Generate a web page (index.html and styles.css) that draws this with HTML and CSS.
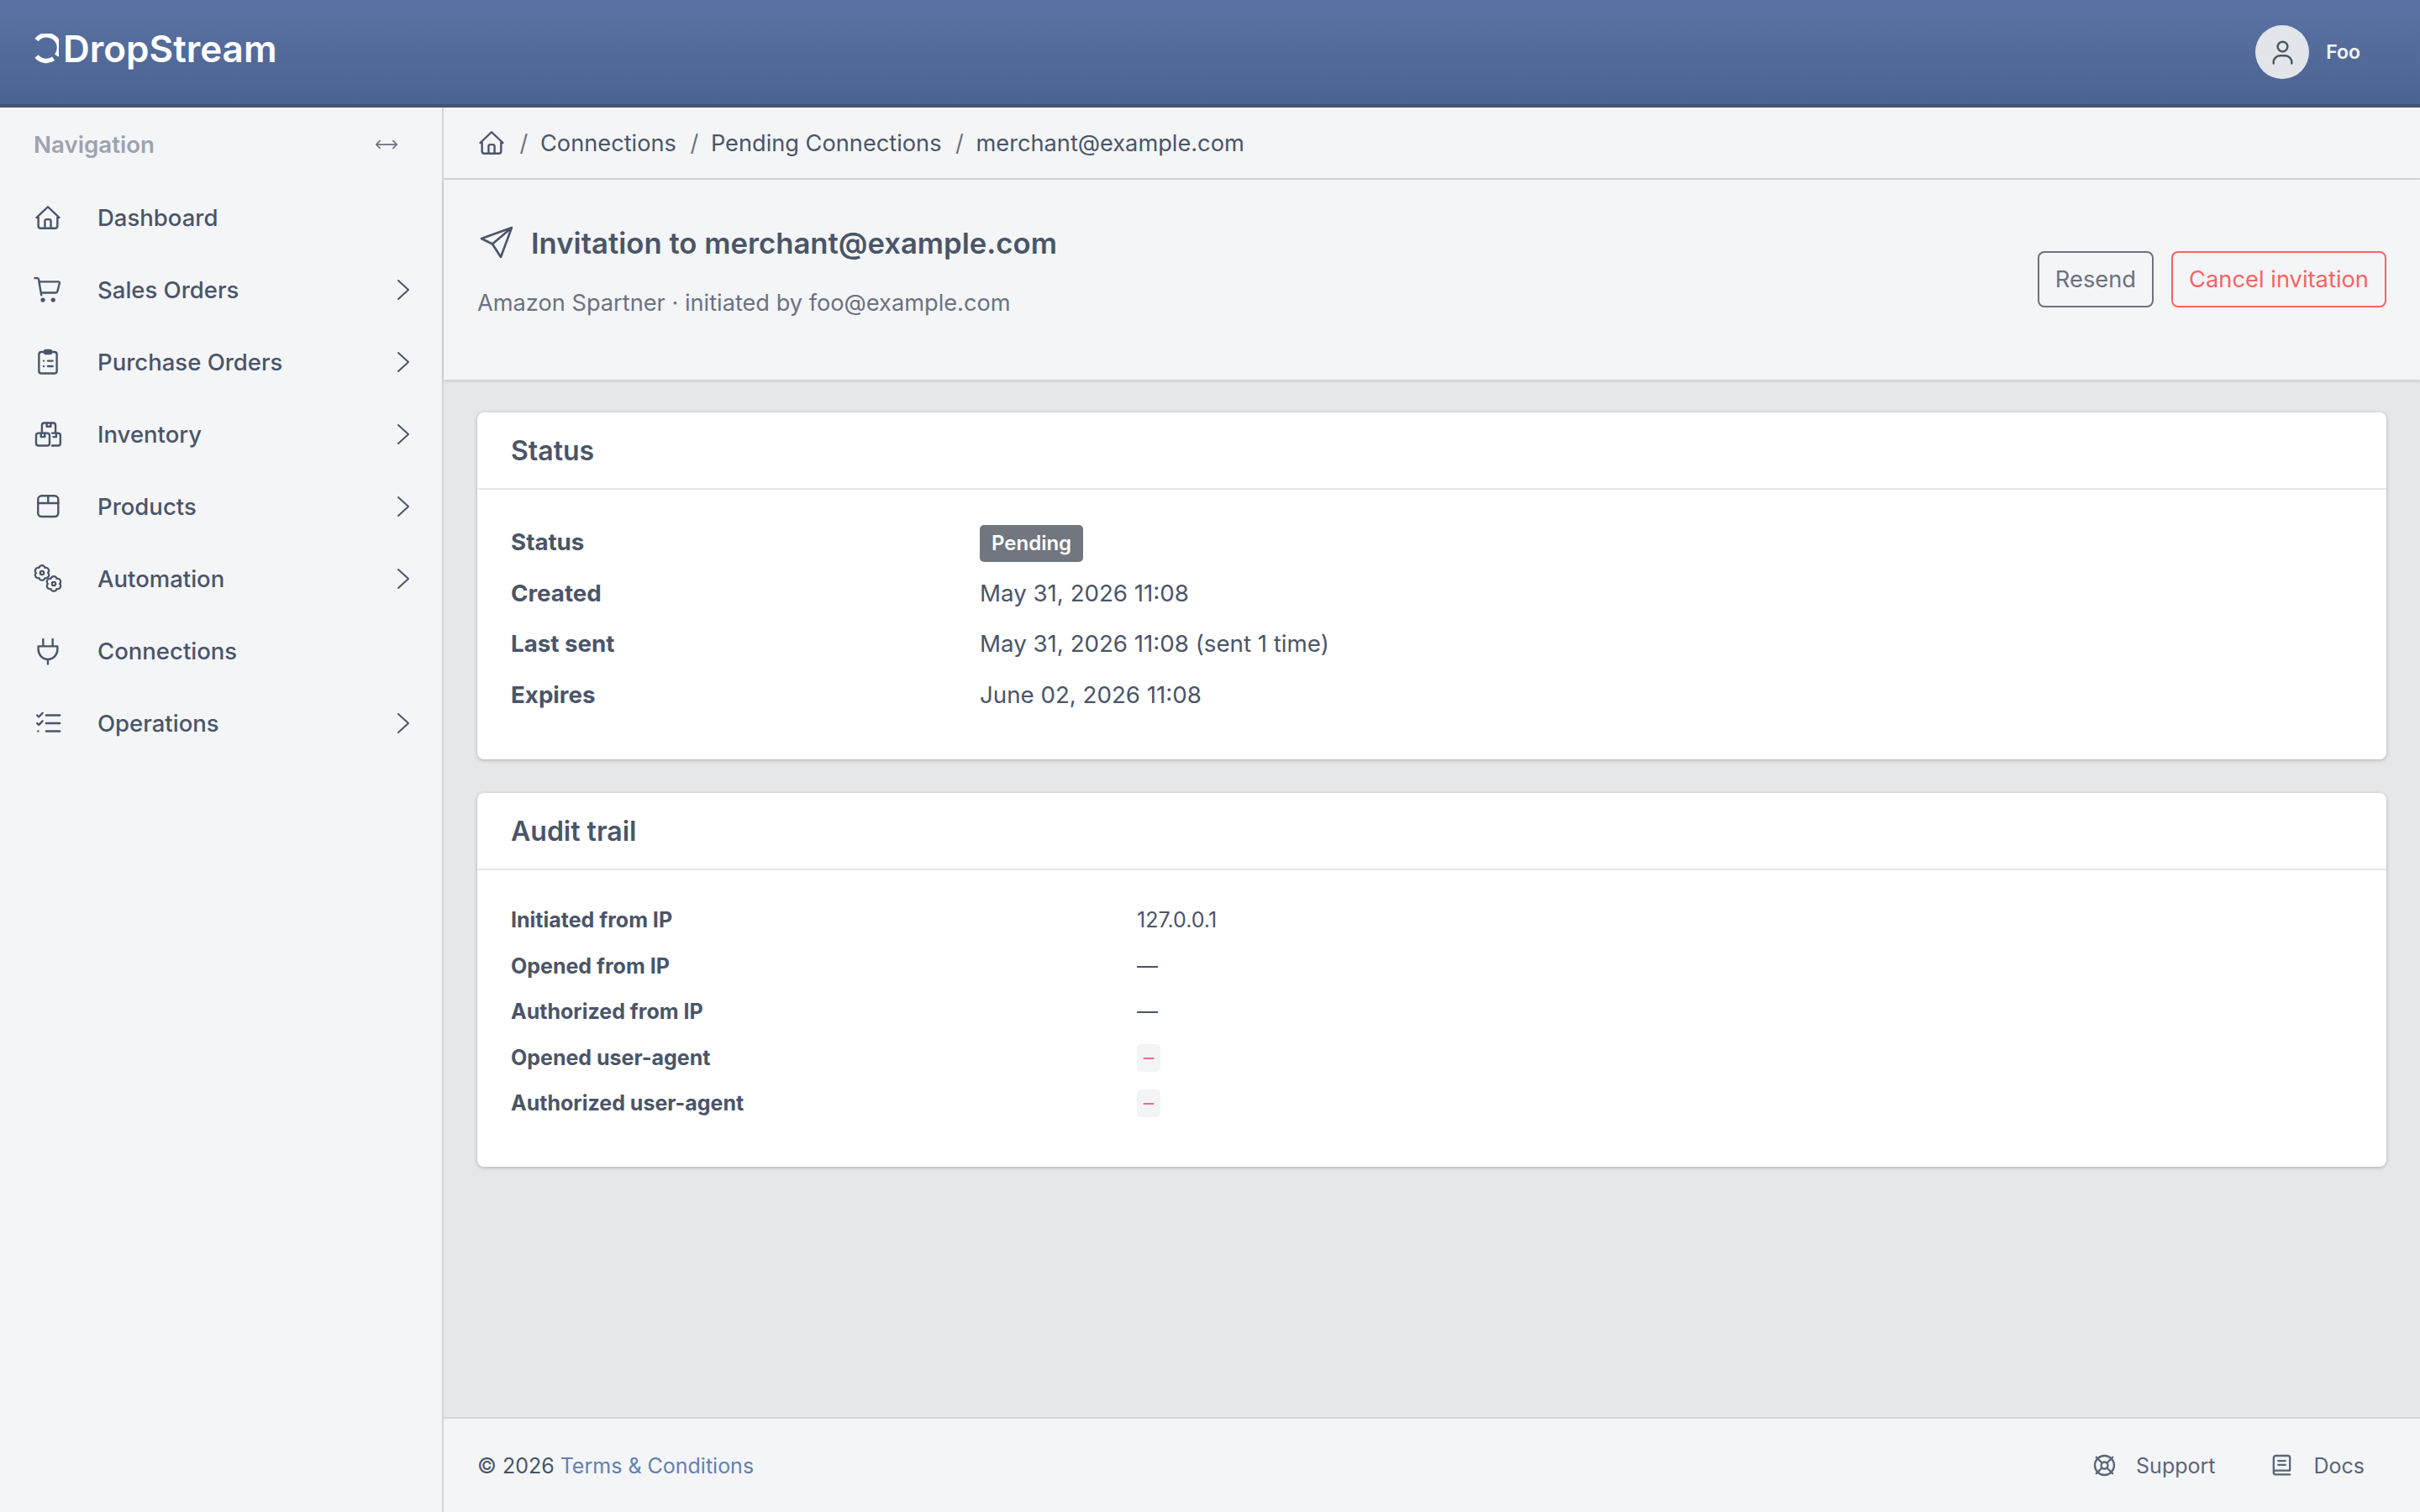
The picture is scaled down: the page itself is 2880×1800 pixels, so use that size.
FILE: index.html
```html
<!DOCTYPE html>
<html lang="en">
<head>
  <meta charset="UTF-8">
  <title>Invitation to merchant@example.com</title>
  <link rel="stylesheet" href="styles.css">
</head>
<body>
  <header class="topbar">
    <div class="brand">
      <svg class="brand-mark" viewBox="0 0 30 36" fill="none" stroke="#fff" stroke-width="5.500">
        <path d="M3.500 7.500A15 15 0 0 1 27.300 26.100"/>
        <path d="M23.600 29.800A15 15 0 0 1 3.500 27.100"/>
      </svg>
      <span class="brand-name">DropStream</span>
    </div>
    <div class="user">
      <span class="avatar">
        <svg viewBox="0 0 24 24" fill="none" stroke="#4b5563" stroke-width="1.600" stroke-linecap="round"><circle cx="12" cy="7.500" r="3.800"/><path d="M5 20.500v-1a5 5 0 0 1 5-5h4a5 5 0 0 1 5 5v1"/></svg>
      </span>
      <span class="user-name">Foo</span>
    </div>
  </header>

  <div class="shell">
    <aside class="sidebar">
      <div class="side-head">
        <span>Navigation</span>
        <svg class="side-toggle" viewBox="0 0 32 14" fill="none" stroke="#6b7280" stroke-width="2" stroke-linecap="round" stroke-linejoin="round"><path d="M2 7h28M7 2 2 7l5 5M25 2l5 5-5 5"/></svg>
      </div>
      <nav class="nav">
        <a class="nav-item">
          <svg class="nav-icon" viewBox="0 0 24 24"><path d="M4 12H2.500L12 3l9.500 9H20v7a2 2 0 0 1-2 2H6a2 2 0 0 1-2-2z"/><path d="M9.500 21v-6a1.500 1.500 0 0 1 1.500-1.500h2a1.500 1.500 0 0 1 1.500 1.500v6"/></svg>
          <span>Dashboard</span>
        </a>
        <a class="nav-item">
          <svg class="nav-icon" viewBox="0 0 24 24"><path d="M1 2.200h2.200a1 1 0 0 1 1 .8L6.500 16.500M4.600 5.200h16.200a1 1 0 0 1 1 1.200l-1.800 7a1.500 1.500 0 0 1-1.400 1.100H6.200"/><circle class="dot" cx="7.800" cy="20.500" r="1"/><circle class="dot" cx="16.400" cy="20.500" r="1"/></svg>
          <span>Sales Orders</span>
          <svg class="chev" viewBox="0 0 16 26"><path d="M2 2l12 11L2 24"/></svg>
        </a>
        <a class="nav-item">
          <svg class="nav-icon" viewBox="0 0 24 24"><rect x="4.500" y="3.500" width="15" height="18" rx="2"/><path d="M9 3.500a1.500 1.500 0 0 1 1.500-1.500h3a1.500 1.500 0 0 1 1.500 1.500 1.500 1.500 0 0 1-1.500 1.500h-3A1.500 1.500 0 0 1 9 3.500z"/><path d="M8.500 11h.01M8.500 15.500h.01M12 11h4M12 15.500h4"/></svg>
          <span>Purchase Orders</span>
          <svg class="chev" viewBox="0 0 16 26"><path d="M2 2l12 11L2 24"/></svg>
        </a>
        <a class="nav-item">
          <svg class="nav-icon" viewBox="0 0 24 24"><path d="M7 11V4.500a2 2 0 0 1 2-2h7.400a2 2 0 0 1 2 2V11"/><path d="M11 2.500v3h3.400v-3"/><rect x="2.100" y="11" width="11.300" height="10.500" rx="2"/><path d="M6.200 11v3.200h3.200V11"/><path d="M15.500 11h5a2 2 0 0 1 2 2v6.500a2 2 0 0 1-2 2h-5"/><path d="M16.500 14.200H19V11"/></svg>
          <span>Inventory</span>
          <svg class="chev" viewBox="0 0 16 26"><path d="M2 2l12 11L2 24"/></svg>
        </a>
        <a class="nav-item">
          <svg class="nav-icon" viewBox="0 0 24 24"><rect x="3.700" y="3" width="17" height="17.500" rx="3"/><path d="M3.700 9.200h17M12.200 3v6.200"/></svg>
          <span>Products</span>
          <svg class="chev" viewBox="0 0 16 26"><path d="M2 2l12 11L2 24"/></svg>
        </a>
        <a class="nav-item">
          <svg class="nav-icon nav-icon-gears" viewBox="0 0 34 34">
            <path d="M17 10a3.600 3.600 0 0 1-3.500 6.060a3.600 3.600 0 0 1-7 0a3.600 3.600 0 0 1-3.500-6.060a3.600 3.600 0 0 1 3.500-6.060a3.600 3.600 0 0 1 7 0a3.600 3.600 0 0 1 3.500 6.060z"/><circle cx="10" cy="10" r="2.200"/>
            <path d="M31 23a3.600 3.600 0 0 1-3.500 6.060a3.600 3.600 0 0 1-7 0a3.600 3.600 0 0 1-3.500-6.060a3.600 3.600 0 0 1 3.500-6.060a3.600 3.600 0 0 1 7 0a3.600 3.600 0 0 1 3.500 6.060z"/><circle cx="24" cy="23" r="2.200"/>
          </svg>
          <span>Automation</span>
          <svg class="chev" viewBox="0 0 16 26"><path d="M2 2l12 11L2 24"/></svg>
        </a>
        <a class="nav-item">
          <svg class="nav-icon" viewBox="0 0 24 24"><path d="M8 2v6M16 2v6M4 8h16v3a8 8 0 0 1-16 0zM12 19v4"/></svg>
          <span>Connections</span>
        </a>
        <a class="nav-item">
          <svg class="nav-icon" viewBox="0 0 24 24"><path d="M10.500 5.300H22M10.500 12H22M10.500 18.700H22M3 5.300l1.400 1.400L7.500 3.500M3 12l1.400 1.400 3.100-3.200M3.800 18.700h.01"/></svg>
          <span>Operations</span>
          <svg class="chev" viewBox="0 0 16 26"><path d="M2 2l12 11L2 24"/></svg>
        </a>
      </nav>
    </aside>

    <div class="main">
      <div class="crumbs">
        <svg class="crumb-home" viewBox="0 0 24 24"><path d="M4 12H2.500L12 3l9.500 9H20v7a2 2 0 0 1-2 2H6a2 2 0 0 1-2-2z"/><path d="M9.500 21v-6a1.500 1.500 0 0 1 1.500-1.500h2a1.500 1.500 0 0 1 1.500 1.500v6"/></svg>
        <span class="crumb-sep">/</span><span>Connections</span>
        <span class="crumb-sep">/</span><span>Pending Connections</span>
        <span class="crumb-sep">/</span><span>merchant@example.com</span>
      </div>

      <section class="page-head">
        <div class="head-text">
          <h1 class="page-title">
            <svg class="title-icon" viewBox="0 0 40 40"><path d="M38 2 2 15l13 6.500L25 37zM15 21.500 38 2"/></svg>
            Invitation to merchant@example.com
          </h1>
          <p class="page-sub">Amazon Spartner · initiated by foo@example.com</p>
        </div>
        <div class="actions">
          <button class="btn">Resend</button>
          <button class="btn btn-danger">Cancel invitation</button>
        </div>
      </section>

      <main class="content">
        <section class="card">
          <h2 class="card-title">Status</h2>
          <dl class="status-rows">
            <dt>Status</dt><dd><span class="badge">Pending</span></dd>
            <dt>Created</dt><dd>May 31, 2026 11:08</dd>
            <dt>Last sent</dt><dd>May 31, 2026 11:08 (sent 1 time)</dd>
            <dt>Expires</dt><dd>June 02, 2026 11:08</dd>
          </dl>
        </section>

        <section class="card">
          <h2 class="card-title">Audit trail</h2>
          <dl class="audit-rows">
            <dt>Initiated from IP</dt><dd>127.0.0.1</dd>
            <dt>Opened from IP</dt><dd>—</dd>
            <dt>Authorized from IP</dt><dd>—</dd>
            <dt>Opened user-agent</dt><dd><code class="empty">–</code></dd>
            <dt>Authorized user-agent</dt><dd><code class="empty">–</code></dd>
          </dl>
        </section>
      </main>

      <footer class="footer">
        <div>© 2026 <a class="footer-link">Terms &amp; Conditions</a></div>
        <div class="footer-right">
          <a class="footer-item">
            <svg viewBox="0 0 24 24"><circle cx="12" cy="12" r="9.500"/><circle cx="12" cy="12" r="3.300"/><path d="M4 4l5.500 5.500M20 4l-5.500 5.500M4 20l5.500-5.500M20 20l-5.500-5.500"/></svg>
            Support
          </a>
          <a class="footer-item">
            <svg viewBox="0 0 24 24"><path d="M4 19V4.500a2 2 0 0 1 2-2h12a2 2 0 0 1 2 2V17H6a2 2 0 0 0-2 2 2 2 0 0 0 2 2h14"/><path d="M8.500 7.500h7M8.500 11.500h7"/></svg>
            Docs
          </a>
        </div>
      </footer>
    </div>
  </div>
</body>
</html>
```

FILE: styles.css
```css
* {
  box-sizing: border-box;
}

html, body {
  height: 100%;
}

body {
  margin: 0;
  font-family: Inter, "Liberation Sans", sans-serif;
  font-size: 27.700px;
  color: #4a5568;
  background-color: #e6e7e9;
  overflow: hidden;
}

svg {
  display: block;
  flex: none;
}

/* top bar */
.topbar {
  height: 128px;
  display: flex;
  align-items: center;
  justify-content: space-between;
  padding: 0 71px 0 40px;
  background: linear-gradient(#5b73a4, #4b6390);
  border-bottom: 4px solid #405479;
}

.brand {
  display: flex;
  align-items: center;
  gap: 5px;
  color: white;
  margin-top: -8px;
}

.brand-mark {
  width: 30px;
  height: 36px;
}

.brand-name {
  font-size: 44px;
  font-weight: 600;
  line-height: 1;
}

.user {
  display: flex;
  align-items: center;
  gap: 20px;
  color: #f3f4f6;
  font-size: 23px;
  font-weight: 600;
}

.avatar {
  width: 64px;
  height: 64px;
  display: flex;
  align-items: center;
  justify-content: center;
  border-radius: 50%;
  background-color: #e2e5e9;
}

.avatar svg {
  width: 37px;
  height: 37px;
}

/* layout */
.shell {
  display: flex;
  height: calc(100% - 128px);
}

.sidebar {
  width: 528px;
  flex: none;
  background-color: #f4f5f7;
  border-right: 2px solid #d1d5db;
  padding: 0 38px 0 40px;
}

.side-head {
  height: 88px;
  display: flex;
  align-items: center;
  justify-content: space-between;
  color: #9ca3af;
  font-weight: 600;
}

.side-toggle {
  width: 28px;
  height: 14px;
  margin-right: 14px;
}

.nav {
  display: flex;
  flex-direction: column;
}

.nav-item {
  height: 86px;
  display: flex;
  align-items: center;
  font-size: 27.500px;
  font-weight: 500;
  color: #4a5568;
}

.nav-item span {
  flex: 1;
}

.nav-icon {
  width: 34px;
  height: 34px;
  margin-right: 42px;
  fill: none;
  stroke: #4a5568;
  stroke-width: 1.700;
  stroke-linecap: round;
  stroke-linejoin: round;
}

.nav-icon .dot {
  fill: #4a5568;
}

.nav-icon-gears {
  stroke-width: 2.200;
}

.chev {
  width: 16px;
  height: 26px;
  fill: none;
  stroke: #4a5568;
  stroke-width: 2;
  stroke-linecap: round;
  stroke-linejoin: round;
}

.main {
  flex: 1;
  min-width: 0;
  display: flex;
  flex-direction: column;
}

/* breadcrumbs */
.crumbs {
  height: 86px;
  flex: none;
  display: flex;
  align-items: center;
  gap: 14.600px;
  padding: 0 40px;
  background-color: #f4f5f7;
  border-bottom: 2px solid #d1d5db;
  font-size: 27.200px;
}

.crumb-home {
  width: 34px;
  height: 34px;
  fill: none;
  stroke: #4a5568;
  stroke-width: 1.700;
  stroke-linejoin: round;
}

.crumb-sep {
  color: #6b7280;
  margin-left: 2px;
}

/* page head */
.page-head {
  height: 238px;
  flex: none;
  display: flex;
  align-items: center;
  justify-content: space-between;
  padding: 0 40px;
  background-color: #f4f5f7;
  box-shadow: 0 2px 4px rgba(0, 0, 0, 0.12);
}

.head-text {
  margin-bottom: 21px;
}

.page-title {
  margin: 0 0 34px;
  display: flex;
  align-items: center;
  gap: 21px;
  font-size: 34.700px;
  font-weight: 600;
  color: #4a5568;
}

.title-icon {
  width: 40px;
  height: 40px;
  margin-left: 3px;
  fill: none;
  stroke: #4a5568;
  stroke-width: 2.600;
  stroke-linejoin: round;
}

.page-sub {
  margin: 0;
  font-size: 27.200px;
  color: #6b7280;
}

.actions {
  display: flex;
  gap: 21px;
  margin-bottom: 2px;
}

.btn {
  height: 67px;
  padding: 0 19px;
  font: inherit;
  font-size: 27.300px;
  color: #6b7280;
  background: transparent;
  border: 2px solid #6b7280;
  border-radius: 8px;
}

.btn-danger {
  color: #f56565;
  border-color: #f56565;
}

/* cards */
.content {
  flex: 1;
  min-height: 0;
  display: flex;
  flex-direction: column;
  gap: 40px;
  padding: 39px 40px;
}

.card {
  background-color: white;
  border-radius: 8px;
  box-shadow: 0 1px 4px rgba(0, 0, 0, 0.25);
}

.card-title {
  height: 92px;
  margin: 0;
  display: flex;
  align-items: center;
  padding: 0 40px;
  font-size: 32px;
  font-weight: 600;
  color: #4a5568;
  border-bottom: 2px solid #e5e7eb;
}

.status-rows {
  margin: 0;
  display: grid;
  grid-template-columns: 558px 1fr;
  grid-auto-rows: 60.500px;
  align-items: center;
  padding: 32px 40px 47px;
}

.status-rows dt {
  font-weight: 700;
}

.status-rows dd,
.audit-rows dd {
  margin: 0;
}

.badge {
  display: inline-block;
  margin-top: 3px;
  padding: 7px 14px;
  font-size: 24px;
  font-weight: 600;
  line-height: 30px;
  color: white;
  background-color: #72767f;
  border-radius: 5px;
}

.audit-rows {
  margin: 0;
  display: grid;
  grid-template-columns: 745px 1fr;
  grid-auto-rows: 54.500px;
  align-items: center;
  padding: 32px 40px 48px;
  font-size: 25px;
}

.audit-rows dt {
  font-weight: 700;
}

.empty {
  display: inline-block;
  width: 28px;
  height: 33px;
  line-height: 33px;
  text-align: center;
  font-family: inherit;
  color: #f56590;
  background-color: #f3f4f6;
  border-radius: 5px;
  vertical-align: middle;
}

/* footer */
.footer {
  height: 113px;
  flex: none;
  display: flex;
  align-items: center;
  justify-content: space-between;
  padding: 0 66px 0 40px;
  background-color: #f4f5f7;
  border-top: 2px solid #d1d5db;
  font-size: 25px;
}

.footer-link {
  color: #6580b0;
}

.footer-right {
  display: flex;
  gap: 65px;
}

.footer-item {
  display: flex;
  align-items: center;
  gap: 23px;
  color: #5a6577;
}

.footer-item svg {
  width: 29px;
  height: 29px;
  fill: none;
  stroke: #5a6577;
  stroke-width: 1.900;
  stroke-linecap: round;
  stroke-linejoin: round;
}
```
